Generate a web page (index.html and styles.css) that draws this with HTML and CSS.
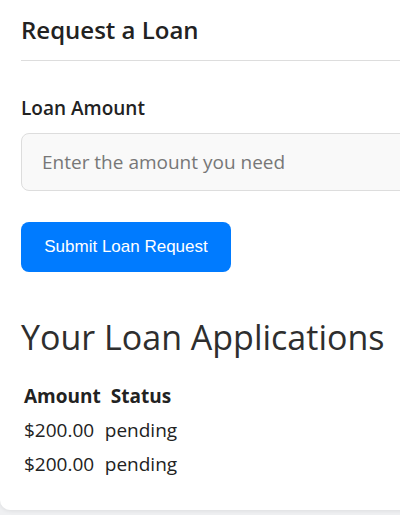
FILE: index.html
```html
<!DOCTYPE html>
<html lang="en">
<head>
    <meta charset="UTF-8">
    <meta name="viewport" content="width=device-width, initial-scale=1.0">
    <title>Request a Loan</title>
    <link rel="stylesheet" href="styles.css">
</head>
<body>

    <div class="page">
        <div class="card">
            <h3 class="card-title">Request a Loan</h3>

            <form id="loan-form">
                <label for="amount">Loan Amount</label>
                <input type="text" id="amount" name="amount" placeholder="Enter the amount you need">
                <button type="button" class="submit-btn">Submit Loan Request</button>
            </form>

            <h2 class="section-title">Your Loan Applications</h2>
            <table class="loans">
                <thead>
                    <tr><th>Amount</th><th>Status</th></tr>
                </thead>
                <tbody>
                    <tr><td>$200.00</td><td>pending</td></tr>
                    <tr><td>$200.00</td><td>pending</td></tr>
                </tbody>
            </table>
        </div>
    </div>

</body>
</html>
```

FILE: styles.css
```css
body {
    font-family: "Open Sans", "Noto Sans", sans-serif;
    background-color: #eff0f2;
    margin: 0;
    padding: 0;
}
.page {
    overflow: hidden;
    padding-bottom: 10px;
}
.card {
    width: 440px;
    background-color: #fff;
    border-radius: 0 0 10px 10px;
    box-shadow: 0 1px 4px rgba(0, 0, 0, 0.08);
    padding: 15px 21px 28px;
}
.card-title {
    margin: 0;
    padding-bottom: 15px;
    border-bottom: 1px solid #ddd;
    font-size: 24px;
    line-height: 30px;
    font-weight: 600;
    color: #222;
}
#loan-form {
    padding-top: 35px;
}
label {
    display: block;
    font-size: 19px;
    line-height: 24px;
    font-weight: 600;
    color: #222;
    margin-bottom: 13px;
}
input {
    display: block;
    box-sizing: border-box;
    width: 100%;
    height: 58px;
    padding: 0 20px;
    font-family: inherit;
    font-size: 19px;
    background-color: #f9f9f9;
    border: 1px solid #ddd;
    border-radius: 8px;
    margin-bottom: 31px;
}
input::placeholder {
    color: #777;
}
.submit-btn {
    display: block;
    width: 210px;
    height: 50px;
    background-color: #007bff;
    color: #fff;
    font-family: "Liberation Sans", Arial, sans-serif;
    font-size: 17px;
    border: none;
    border-radius: 8px;
    cursor: pointer;
}
.section-title {
    margin: 45px 0 21px;
    font-size: 34px;
    line-height: 40px;
    font-weight: 500;
    color: #2e2e2e;
}
.loans {
    font-size: 19px;
    line-height: 24px;
    color: #222;
}
.loans th,
.loans td {
    padding: 4px 1px;
}
.loans th {
    font-weight: 700;
}
```
